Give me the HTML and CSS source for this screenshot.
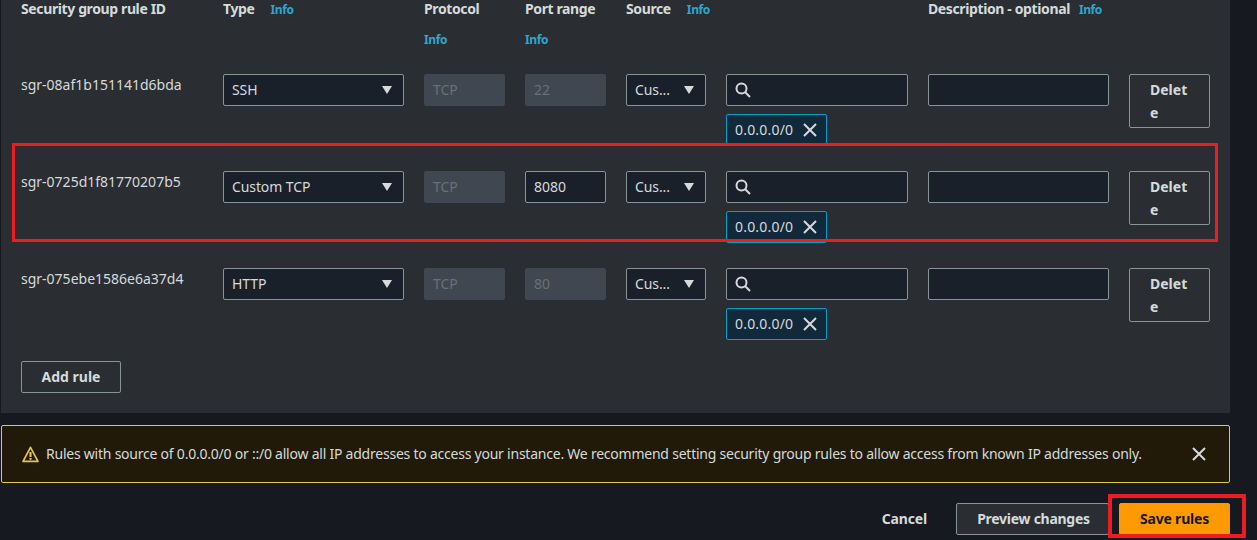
FILE: index.html
```html
<!DOCTYPE html>
<html lang="en">
  <head>
    <meta charset="UTF-8" />
    <title>Edit inbound rules</title>
    <link rel="stylesheet" href="styles.css">
  </head>
  <body>
    <section class="panel">
      <div class="rule-grid head-row">
        <div class="head-cell"><b>Security group rule ID</b></div>
        <div class="head-cell"><b>Type</b><a class="info">Info</a></div>
        <div class="head-cell stacked"><b>Protocol</b><a class="info">Info</a></div>
        <div class="head-cell stacked"><b>Port range</b><a class="info">Info</a></div>
        <div class="head-cell nowrap"><b>Source</b><a class="info">Info</a></div>
        <div></div>
        <div class="head-cell nowrap"><b>Description - optional</b><a class="info info-near">Info</a></div>
        <div></div>
      </div>

      <!-- rule rows -->
      <div class="rule-grid rule-row">
        <div class="rule-id">sgr-08af1b151141d6bda</div>
        <div class="select"><span>SSH</span><svg class="caret" viewBox="0 0 12 10"><path d="M1 1h10L6 9z" /></svg></div>
        <div class="field disabled">TCP</div>
        <div class="field disabled">22</div>
        <div class="select small"><span>Cus...</span><svg class="caret" viewBox="0 0 12 10"><path d="M1 1h10L6 9z" /></svg></div>
        <div class="source">
          <div class="field search"><svg class="icon" viewBox="0 0 16 16"><circle cx="6.5" cy="6.5" r="5" /><path d="M10 10l5 5" /></svg></div>
          <div class="token">0.0.0.0/0<svg class="icon close" viewBox="0 0 16 16"><path d="M2 2l12 12M14 2L2 14" /></svg></div>
        </div>
        <div class="field"></div>
        <button class="btn delete">Delete</button>
      </div>

      <div class="rule-grid rule-row">
        <div class="rule-id">sgr-0725d1f81770207b5</div>
        <div class="select"><span>Custom TCP</span><svg class="caret" viewBox="0 0 12 10"><path d="M1 1h10L6 9z" /></svg></div>
        <div class="field disabled">TCP</div>
        <div class="field">8080</div>
        <div class="select small"><span>Cus...</span><svg class="caret" viewBox="0 0 12 10"><path d="M1 1h10L6 9z" /></svg></div>
        <div class="source">
          <div class="field search"><svg class="icon" viewBox="0 0 16 16"><circle cx="6.5" cy="6.5" r="5" /><path d="M10 10l5 5" /></svg></div>
          <div class="token">0.0.0.0/0<svg class="icon close" viewBox="0 0 16 16"><path d="M2 2l12 12M14 2L2 14" /></svg></div>
        </div>
        <div class="field"></div>
        <button class="btn delete">Delete</button>
      </div>

      <div class="rule-grid rule-row">
        <div class="rule-id">sgr-075ebe1586e6a37d4</div>
        <div class="select"><span>HTTP</span><svg class="caret" viewBox="0 0 12 10"><path d="M1 1h10L6 9z" /></svg></div>
        <div class="field disabled">TCP</div>
        <div class="field disabled">80</div>
        <div class="select small"><span>Cus...</span><svg class="caret" viewBox="0 0 12 10"><path d="M1 1h10L6 9z" /></svg></div>
        <div class="source">
          <div class="field search"><svg class="icon" viewBox="0 0 16 16"><circle cx="6.5" cy="6.5" r="5" /><path d="M10 10l5 5" /></svg></div>
          <div class="token">0.0.0.0/0<svg class="icon close" viewBox="0 0 16 16"><path d="M2 2l12 12M14 2L2 14" /></svg></div>
        </div>
        <div class="field"></div>
        <button class="btn delete">Delete</button>
      </div>

      <button class="btn add-rule">Add rule</button>
    </section>

    <div class="flash">
      <svg class="warn" viewBox="0 0 16 16">
        <path class="warn-outline" d="M8 1.2L15 14.5H1z" />
        <path class="warn-mark" d="M8 5.6v4.8M8 11.2v1.8" />
      </svg>
      <span class="flash-text">Rules with source of 0.0.0.0/0 or ::/0 allow all IP addresses to access your instance. We recommend setting security group rules to allow access from known IP addresses only.</span>
      <svg class="icon flash-close" viewBox="0 0 16 16"><path d="M2 2l12 12M14 2L2 14" /></svg>
    </div>

    <footer class="actions">
      <a class="cancel">Cancel</a>
      <button class="btn preview">Preview changes</button>
      <button class="btn save">Save rules</button>
    </footer>

    <!-- red annotation boxes drawn on top of the screenshot -->
    <div class="mark mark-row"></div>
    <div class="mark mark-save"></div>
  </body>
</html>
```

FILE: styles.css
```css
* {
  box-sizing: border-box;
}
body {
  margin: 0;
  height: 540px;
  overflow: hidden;
  background-color: #16191f;
  color: #d5dbdb;
  font-family: "Noto Sans", sans-serif;
  font-size: 14px;
  line-height: 20px;
  position: relative;
}
.panel {
  margin: 0 27px 0 1px;
  height: 413px;
  padding: 0 20px;
  background-color: #2a2e33;
}
.rule-grid {
  display: grid;
  grid-template-columns: 182px 181px 81px 81px 80px 182px 181px 81px;
  column-gap: 20px;
}
.head-row {
  height: 74px;
}
.head-cell {
  line-height: 18px;
}
.head-cell b {
  font-weight: 700;
  letter-spacing: -0.38px;
}
.nowrap {
  white-space: nowrap;
}
.info {
  margin-left: 16px;
  font-size: 12px;
  font-weight: 700;
  letter-spacing: -0.4px;
  color: #2ea7cf;
}
.info-near {
  margin-left: 9px;
}
.stacked .info {
  display: block;
  margin: 13px 0 0;
}
.rule-row {
  height: 97px;
  align-items: start;
}
.rule-id {
  padding-top: 1px;
}
.field,
.select {
  height: 32px;
  padding: 0 8px;
  display: flex;
  align-items: center;
  background-color: #1a2029;
  border: 1px solid #879596;
  border-radius: 2px;
}
.select {
  justify-content: space-between;
  padding-right: 10px;
  letter-spacing: -0.1px;
}
.field.disabled {
  background-color: #414750;
  border-color: #414750;
  color: #687078;
}
.caret {
  width: 12px;
  height: 10px;
  fill: #d5dbdb;
}
.icon {
  width: 16px;
  height: 16px;
  fill: none;
  stroke: #d5dbdb;
  stroke-width: 2;
}
.token {
  margin-top: 8px;
  width: 101px;
  height: 32px;
  padding: 0 8px;
  display: flex;
  align-items: center;
  justify-content: space-between;
  letter-spacing: 0.2px;
  background-color: #12293b;
  border: 1px solid #00a1c9;
  border-radius: 2px;
}
.btn {
  padding: 0;
  font-family: inherit;
  font-size: 14px;
  font-weight: 700;
  line-height: 22px;
  color: #d5dbdb;
  background-color: transparent;
  border: 1px solid #879596;
  border-radius: 2px;
}
.delete {
  height: 54px;
  padding: 3px 20px;
  line-height: 23px;
  text-align: left;
  word-break: break-all;
}
.add-rule {
  display: block;
  width: 100px;
  height: 32px;
  margin-top: -4px;
}
.flash {
  margin: 12px 27px 0 1px;
  height: 58px;
  padding: 0 20px;
  display: flex;
  align-items: center;
  background-color: #211a08;
  border: 1px solid #e4c744;
  border-radius: 2px;
}
.warn {
  width: 17px;
  height: 17px;
  margin-right: 7px;
  flex: none;
}
.warn-outline {
  fill: none;
  stroke: #e4c744;
  stroke-width: 1.6;
  stroke-linejoin: round;
}
.warn-mark {
  fill: none;
  stroke: #e4c744;
  stroke-width: 2;
}
.flash-text {
  flex: 1;
  white-space: nowrap;
  letter-spacing: -0.23px;
}
.flash-close {
  margin-right: 2px;
}
.actions {
  margin: 20px 27px 0 0;
  display: flex;
  justify-content: flex-end;
  align-items: center;
}
.cancel {
  margin-right: 29px;
  font-weight: 700;
  letter-spacing: -0.15px;
}
.preview {
  width: 153px;
  height: 32px;
  margin-right: 10px;
  padding-left: 2px;
  letter-spacing: -0.27px;
  background-color: #2a2e33;
}
.save {
  width: 111px;
  height: 32px;
  letter-spacing: -0.2px;
  background-color: #ff9900;
  border-color: #ff9900;
  color: #16191f;
}
.mark {
  position: absolute;
  border: 3px solid #ed1c24;
}
.mark-row {
  left: 12px;
  top: 143px;
  width: 1206px;
  height: 99px;
}
.mark-save {
  left: 1108px;
  top: 494px;
  width: 138px;
  height: 44px;
  border-width: 4px;
}
```
